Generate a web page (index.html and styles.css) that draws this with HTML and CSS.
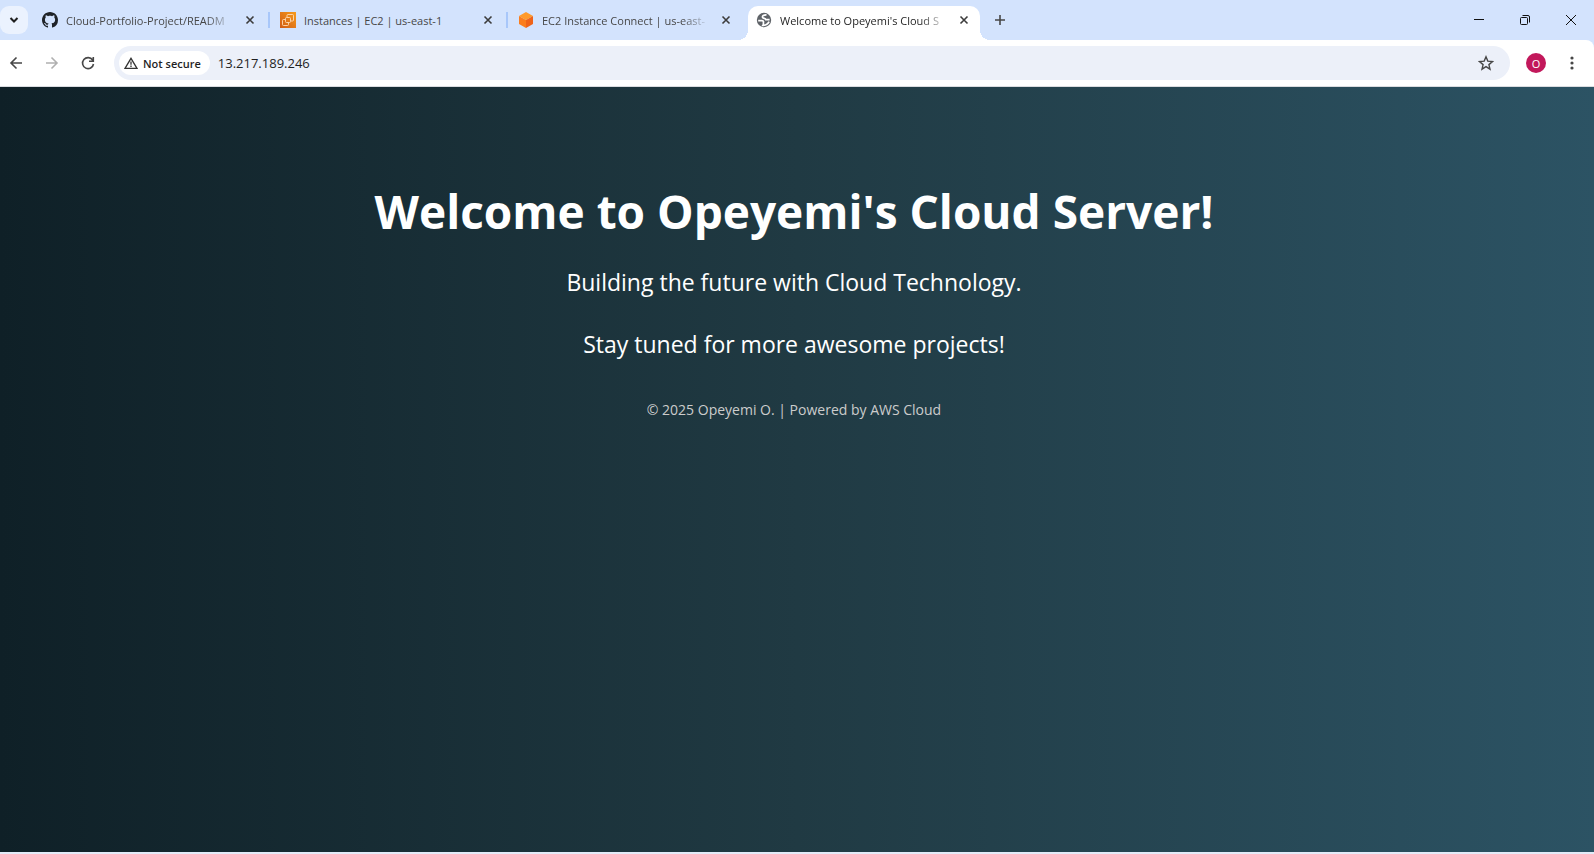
FILE: index.html
```html
<!DOCTYPE html>
<html lang="en">
<head>
<meta charset="utf-8">
<title>Welcome to Opeyemi's Cloud Server!</title>
<link rel="stylesheet" href="styles.css">
</head>
<body>
<div class="browser">
  <header class="tab-strip">
    <button class="tab-search" aria-label="Search tabs">
      <svg width="10" height="8" viewBox="0 0 10 8"><path d="M1.5 2 5 5.500 8.500 2" fill="none" stroke="#1f1f1f" stroke-width="2"/></svg>
    </button>
    <nav class="tabs" aria-label="Tabs">
      <div class="tab">
        <svg class="tab-icon" viewBox="0 0 16 16"><path fill="#1f2328" d="M8 0C3.580 0 0 3.580 0 8c0 3.540 2.290 6.530 5.470 7.590.4.070.550-.170.550-.380 0-.190-.010-.820-.010-1.490-2.010.370-2.530-.490-2.690-.940-.090-.230-.480-.940-.820-1.130-.280-.150-.680-.520-.010-.530.630-.010 1.080.580 1.230.820.720 1.210 1.870.870 2.330.660.070-.520.280-.870.510-1.070-1.780-.200-3.640-.890-3.640-3.950 0-.870.310-1.590.820-2.150-.080-.200-.360-1.020.080-2.120 0 0 .670-.210 2.200.820.640-.180 1.320-.270 2-.270s1.360.090 2 .270c1.530-1.040 2.200-.820 2.200-.820.440 1.100.160 1.920.080 2.120.510.560.820 1.270.820 2.150 0 3.070-1.870 3.750-3.650 3.950.290.250.540.730.540 1.480 0 1.070-.010 1.930-.010 2.200 0 .210.150.460.550.380A8.010 8.010 0 0 0 16 8c0-4.420-3.580-8-8-8z"/></svg>
        <span class="tab-title tab-title-faded">Cloud-Portfolio-Project/READM</span>
        <button class="tab-close" aria-label="Close tab"><svg width="10" height="10" viewBox="0 0 10 10"><path d="m1.500 1.500 7 7m0-7-7 7"/></svg></button>
      </div>
      <div class="tab">
        <svg class="tab-icon" viewBox="0 0 16 16"><defs><linearGradient id="ec2" x1="0" y1="1" x2="1" y2="0"><stop stop-color="#d05c17"/><stop offset="1" stop-color="#f79b1c"/></linearGradient></defs><path fill="url(#ec2)" d="M0 0h16v16H0z"/><g fill="none" stroke="#ffdcb8" stroke-width=".9"><path d="M7 5V3.500q0-1 1-1h4.500q1 0 1 1V8q0 1-1 1H11"/><rect x="5.500" y="5.500" width="5" height="5" rx="1"/><path d="M5 7.500H3.500q-1 0-1 1v4q0 1 1 1h4q1 0 1-1V11"/></g></svg>
        <span class="tab-title">Instances | EC2 | us-east-1</span>
        <button class="tab-close" aria-label="Close tab"><svg width="10" height="10" viewBox="0 0 10 10"><path d="m1.500 1.500 7 7m0-7-7 7"/></svg></button>
      </div>
      <div class="tab tab-before-active">
        <svg class="tab-icon" viewBox="0 0 16 16"><path fill="#ff9a2a" d="m8 0 7 4-7 4-7-4z"/><path fill="#fb7d1d" d="m1 4 7 4v8l-7-4z"/><path fill="#ef6319" d="M15 4 8 8v8l7-4z"/></svg>
        <span class="tab-title tab-title-faded">EC2 Instance Connect | us-east-</span>
        <button class="tab-close" aria-label="Close tab"><svg width="10" height="10" viewBox="0 0 10 10"><path d="m1.500 1.500 7 7m0-7-7 7"/></svg></button>
      </div>
      <div class="tab tab-active">
        <svg class="tab-icon" viewBox="0 0 16 16"><circle cx="8" cy="8" r="7.200" fill="#5f6368"/><path fill="none" stroke="#fff" stroke-width="1.700" d="M10.500 2.900C7.500 2.800 6.200 3.800 6.500 5.200s3 1 3.300 2.400h3.800M2.200 8.600h3.500c1.600 0 2 .8 1.700 2 0 1 .2 1.800-.4 2.700 3 .2 5-1.300 6.100-3.600"/></svg>
        <span class="tab-title tab-title-faded">Welcome to Opeyemi's Cloud S</span>
        <button class="tab-close" aria-label="Close tab"><svg width="10" height="10" viewBox="0 0 10 10"><path d="m1.500 1.500 7 7m0-7-7 7"/></svg></button>
      </div>
    </nav>
    <button class="new-tab" aria-label="New tab"><svg width="12" height="12" viewBox="0 0 12 12"><path d="M6 1v10M1 6h10" stroke="#474747" stroke-width="1.600"/></svg></button>
    <div class="window-controls">
      <button aria-label="Minimize"><svg width="10" height="10" viewBox="0 0 10 10"><path d="M0 4.500h10"/></svg></button>
      <button aria-label="Restore"><svg width="10" height="10" viewBox="0 0 10 10"><rect x=".5" y="2.500" width="7" height="7" rx="1"/><path d="M2.500.5H8Q9.500.5 9.500 2v5.500"/></svg></button>
      <button aria-label="Close"><svg width="10" height="10" viewBox="0 0 10 10"><path d="m0 0 10 10M10 0 0 10"/></svg></button>
    </div>
  </header>

  <div class="toolbar">
    <div class="nav-buttons">
      <button aria-label="Back"><svg width="16" height="16" viewBox="0 0 16 16"><path d="M14 8H3m5.500-5.500L3 8l5.500 5.500"/></svg></button>
      <button aria-label="Forward" disabled><svg width="16" height="16" viewBox="0 0 16 16"><path d="M2 8h11M7.500 2.500 13 8l-5.500 5.500"/></svg></button>
      <button aria-label="Reload"><svg width="16" height="16" viewBox="0 0 16 16"><path d="M13.500 9A5.500 5.500 0 1 1 12.600 5M13.300 2v4.200H9"/></svg></button>
    </div>
    <div class="omnibox">
      <button class="security-chip">
        <svg width="14" height="12" viewBox="0 0 14 12"><path d="M7 1.300 13 11.300H1z" fill="none" stroke="#333" stroke-width="1.300"/><path d="M7 4.500v3.300M7 8.600v1.300" stroke="#333" stroke-width="1.300"/></svg>
        Not secure
      </button>
      <input class="url" type="text" aria-label="Address" value="13.217.189.246">
      <button class="bookmark" aria-label="Bookmark this tab"><svg width="16" height="16" viewBox="0 0 16 16"><path d="m8 1.800 1.800 4.300 4.700.4-3.600 3.100 1.100 4.600L8 11.700l-4 2.500 1.100-4.600-3.600-3.100 4.700-.4z" fill="none" stroke="#474747" stroke-width="1.400"/></svg></button>
    </div>
    <button class="avatar" aria-label="Profile">O</button>
    <button class="menu" aria-label="Menu"><svg width="4" height="14" viewBox="0 0 4 14" fill="#474747"><circle cx="2" cy="2" r="1.600"/><circle cx="2" cy="7" r="1.600"/><circle cx="2" cy="12" r="1.600"/></svg></button>
  </div>

  <main class="page">
    <h1>Welcome to Opeyemi's Cloud Server!</h1>
    <p>Building the future with Cloud Technology.</p>
    <p>Stay tuned for more awesome projects!</p>
    <footer>© 2025 Opeyemi O. | Powered by AWS Cloud</footer>
  </main>
</div>
</body>
</html>
```
FILE: styles.css
```css
* {
  box-sizing: border-box;
}

body {
  margin: 0;
  font-family: "Open Sans", "Noto Sans", sans-serif;
}

button {
  display: flex;
  align-items: center;
  justify-content: center;
  padding: 0;
  border: 0;
  background: none;
  font: inherit;
}

.browser {
  display: flex;
  flex-direction: column;
  min-height: 100vh;
  background: #d3e3fd;
  border-bottom: 2px solid #e3ebf8;
}

/* Tab strip */
.tab-strip {
  display: flex;
  height: 40px;
  padding-top: 6px;
}

.tab-search {
  width: 28px;
  height: 28px;
  border-radius: 9px;
  background: #ebf2fe;
}

.tabs {
  display: flex;
  margin-left: 4px;
}

.tab {
  position: relative;
  display: flex;
  align-items: center;
  gap: 8px;
  width: 238px;
  height: 34px;
  padding: 0 12px 6px 10px;
}

.tab::after {
  content: "";
  position: absolute;
  right: 0;
  top: 6px;
  width: 2px;
  height: 16px;
  background: #a8c7fa;
}

.tab-before-active::after {
  display: none;
}

.tab-active {
  width: 232px;
  margin-left: 2px;
  padding: 0 8px 6px;
  border-radius: 10px 10px 0 0;
  background: #fff;
}

.tab-active::before,
.tab-active::after {
  content: "";
  position: absolute;
  top: auto;
  bottom: 0;
  width: 10px;
  height: 10px;
}

.tab-active::before {
  left: -10px;
  background: radial-gradient(circle at 0 0, #d3e3fd 10px, #fff 10px);
}

.tab-active::after {
  right: -10px;
  background: radial-gradient(circle at 100% 0, #d3e3fd 10px, #fff 10px);
}

.tab-icon {
  flex: none;
  width: 16px;
  height: 16px;
}

.tab-title {
  flex: 1;
  padding-top: 2px;
  white-space: nowrap;
  font-size: 11px;
  line-height: 18px;
  color: #474747;
}

.tab-title-faded {
  mask-image: linear-gradient(to right, #000 calc(100% - 28px), transparent);
}

.tab-active .tab-title {
  color: #1f1f1f;
}

.tab-close {
  width: 16px;
  height: 16px;
}

.tab-close path {
  stroke: #3c3c3c;
  stroke-width: 1.6;
}

.new-tab {
  width: 28px;
  height: 28px;
  margin-left: 6px;
}

.window-controls {
  display: flex;
  margin-left: auto;
}

.window-controls button {
  width: 46px;
  height: 28px;
}

.window-controls svg {
  fill: none;
  stroke: #111;
}

/* Toolbar */
.toolbar {
  display: flex;
  align-items: center;
  height: 47px;
  padding: 0 12px 0 2px;
  border-bottom: 1px solid #dadce0;
  border-radius: 0 8px 0 0;
  background: #fff;
}

.nav-buttons {
  display: flex;
  gap: 8px;
}

.nav-buttons button {
  width: 28px;
  height: 28px;
}

.nav-buttons svg {
  fill: none;
  stroke: #474747;
  stroke-width: 1.6;
}

.nav-buttons button:disabled svg {
  stroke: #b0b0b0;
}

.omnibox {
  display: flex;
  flex: 1;
  align-items: center;
  height: 34px;
  margin-left: 12px;
  padding: 0 16px 0 5px;
  border-radius: 17px;
  background: #ecf0f9;
}

.security-chip {
  gap: 5px;
  height: 24px;
  padding: 0 9px 0 5px;
  border-radius: 12px;
  background: #fff;
  font-size: 11px;
  font-weight: 600;
  color: #1f1f1f;
}

.url {
  flex: 1;
  min-width: 0;
  padding: 0 8px;
  border: 0;
  outline: 0;
  background: none;
  font: 13px/20px "Open Sans", "Noto Sans", sans-serif;
  color: #1f1f1f;
}

.bookmark {
  width: 16px;
  height: 16px;
}

.avatar {
  width: 20px;
  height: 20px;
  margin-left: 16px;
  border-radius: 50%;
  background: #c2185b;
  font-size: 11px;
  color: #fff;
}

.menu {
  width: 20px;
  height: 20px;
  margin-left: 16px;
}

/* Page */
.page {
  flex: 1;
  padding: 92px 6px 20px 0;
  background: linear-gradient(to right, #0f2027, #203a43, #2c5364);
  text-align: center;
  color: #fff;
}

.page h1 {
  margin: 0 0 23px;
  font-size: 46px;
  line-height: 64px;
}

.page p {
  margin: 0 0 30px;
  font-size: 23px;
  line-height: 32px;
}

.page footer {
  padding-top: 10px;
  font-size: 14px;
  line-height: 20px;
  color: #ccc;
}
```
